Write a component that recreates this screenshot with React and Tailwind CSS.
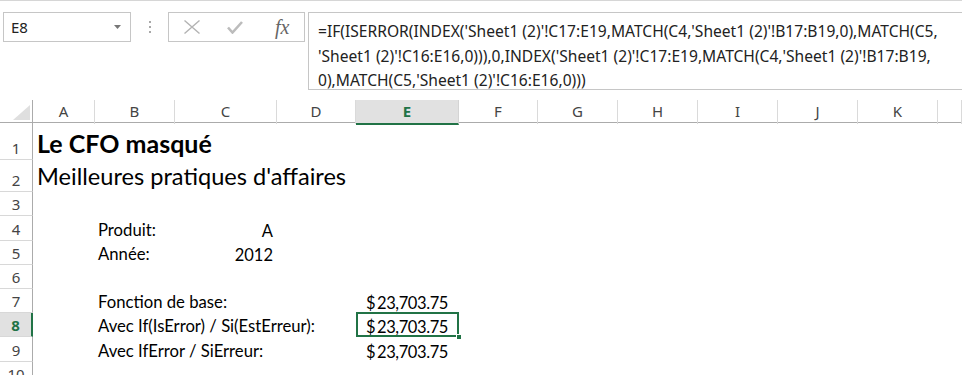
import React from 'react';

const COLS = ['A', 'B', 'C', 'D', 'E', 'F', 'G', 'H', 'I', 'J', 'K', ''];
const GRID = 'grid grid-cols-[33px_62px_80px_102px_79px_103px_79px_80px_80px_80px_80px_80px_1fr]';

const ROWS = [
  { n: 1, h: 'h-[37px]' },
  { n: 2, h: 'h-[32px]' },
  { n: 3, h: 'h-[24px]' },
  { n: 4, h: 'h-[25px]' },
  { n: 5, h: 'h-[24px]' },
  { n: 6, h: 'h-[24px]' },
  { n: 7, h: 'h-[24px]' },
  { n: 8, h: 'h-[24px]' },
  { n: 9, h: 'h-[25px]' },
  { n: 10, h: 'h-[24px]' },
];

function Money({ selected }) {
  return (
    <div className="relative h-full flex items-end justify-between pl-[10px] pr-[11px] pb-[2px] text-[16.5px] leading-none">
      <span>$</span>
      <span className="tracking-[-0.4px]">23,703.75</span>
      {selected && (
        <>
          <div className="absolute inset-0 -top-px border-2 border-[#217346]" />
          <div className="absolute -right-[3px] -bottom-[3px] w-[6px] h-[6px] bg-[#217346] border border-white" />
        </>
      )}
    </div>
  );
}

function cellsFor(n) {
  // content per column index (0 = A)
  const c = {};
  if (n === 1) c[0] = <div className="pl-[4px] pb-[4px] h-full flex items-end whitespace-nowrap font-bold text-[25px] leading-none">Le CFO masqué</div>;
  if (n === 2) c[0] = <div className="pl-[4px] pb-[3px] h-full flex items-end whitespace-nowrap text-[23.6px] leading-none">Meilleures pratiques d'affaires</div>;
  const label = (t) => <div className="pl-[3px] pb-[2px] h-full flex items-end whitespace-nowrap text-[16.7px] leading-none">{t}</div>;
  const right = (t) => <div className="pr-[4px] pb-[2px] h-full flex items-end justify-end whitespace-nowrap text-[16.5px] leading-none">{t}</div>;
  if (n === 4) { c[1] = label('Produit:'); c[2] = right('A'); }
  if (n === 5) { c[1] = label('Année:'); c[2] = right('2012'); }
  if (n === 7) { c[1] = label('Fonction de base:'); c[4] = <Money />; }
  if (n === 8) { c[1] = label('Avec If(IsError) / Si(EstErreur):'); c[4] = <Money selected />; }
  if (n === 9) { c[1] = label('Avec IfError / SiErreur:'); c[4] = <Money />; }
  return c;
}

export default function App() {
  return (
    <div className="w-[962px] h-[375px] overflow-hidden bg-white text-black font-['Lato','Noto_Sans',sans-serif]">
      {/* formula bar */}
      <div className="h-[100px] border-t border-[#d6d6d6] flex items-start pt-[11px] pl-[3px] font-['Noto_Sans','Open_Sans',sans-serif]">
        <div className="w-[128px] h-[30px] border border-[#c6c6c6] flex items-center justify-between pl-[7px] pr-[9px] text-[15px] text-[#222]">
          <span>E8</span>
          <svg width="7" height="4" viewBox="0 0 7 4"><path d="M0 0h7L3.5 4z" fill="#777" /></svg>
        </div>
        <div className="w-[37px] h-[30px] flex flex-col items-center justify-center gap-[3px]">
          <span className="w-[2px] h-[2px] bg-[#a8a8a8]" />
          <span className="w-[2px] h-[2px] bg-[#a8a8a8]" />
          <span className="w-[2px] h-[2px] bg-[#a8a8a8]" />
        </div>
        <div className="w-[137px] h-[30px] border border-[#c6c6c6] flex items-center">
          <svg className="ml-[14px]" width="18" height="14" viewBox="0 0 18 14">
            <path d="M1.5 0.5L16.5 13.5M16.5 0.5L1.5 13.5" stroke="#b4b4b4" strokeWidth="1.4" fill="none" />
          </svg>
          <svg className="ml-[26px]" width="16" height="13" viewBox="0 0 16 13">
            <path d="M1 6.5L5.5 11.5L15 1" stroke="#bcbcbc" strokeWidth="2.6" fill="none" />
          </svg>
          <span className="ml-[32px] font-['Liberation_Serif',serif] italic text-[20px] text-[#666] leading-none">fx</span>
        </div>
        <div className="ml-[3px] flex-1 h-[78px] border border-r-0 border-[#c6c6c6] pl-[9px] pt-[6px] text-[15.6px] leading-[24.5px] text-[#222]">
          <div className="whitespace-nowrap">=IF(ISERROR(INDEX('Sheet1 (2)'!C17:E19,MATCH(C4,'Sheet1 (2)'!B17:B19,0),MATCH(C5,</div>
          <div className="whitespace-nowrap">'Sheet1 (2)'!C16:E16,0))),0,INDEX('Sheet1 (2)'!C17:E19,MATCH(C4,'Sheet1 (2)'!B17:B19,</div>
          <div className="whitespace-nowrap">0),MATCH(C5,'Sheet1 (2)'!C16:E16,0)))</div>
        </div>
      </div>

      {/* column headers */}
      <div className={`${GRID} h-[23px] border-b border-[#ababab] font-['Noto_Sans','Open_Sans',sans-serif] text-[15px] text-[#444]`}>
        <div className="relative border-r border-[#ababab]">
          <svg className="absolute left-[13px] top-[5px]" width="17" height="15" viewBox="0 0 17 15"><path d="M17 0V15H0z" fill="#dfdfdf" /></svg>
        </div>
        {COLS.map((c, i) =>
          c === 'E' ? (
            <div key={i} className="bg-[#e1e1e1] border-r border-[#d4d4d4] border-b-2 border-b-[#217346] -mb-px flex items-center justify-center font-bold text-[#217346]">E</div>
          ) : (
            <div key={i} className="border-r border-[#dadada] flex items-center justify-center leading-none">{c}</div>
          )
        )}
      </div>

      {/* rows */}
      {ROWS.map((r) => {
        const cells = cellsFor(r.n);
        const sel = r.n === 8;
        return (
          <div key={r.n} className={`${GRID} ${r.h}`}>
            <div
              className={`flex items-end justify-center pb-[2px] border-b border-[#d8d8d8] font-['Noto_Sans','Open_Sans',sans-serif] text-[15px] leading-[18px] ${
                sel ? 'bg-[#e1e1e1] border-r-2 border-r-[#217346] text-[#217346] font-bold' : 'border-r border-r-[#ababab] text-[#444]'
              }`}
            >
              {r.n}
            </div>
            {COLS.map((_, i) => (
              <div key={i} className="min-w-0 overflow-visible">{cells[i] || null}</div>
            ))}
          </div>
        );
      })}
    </div>
  );
}
